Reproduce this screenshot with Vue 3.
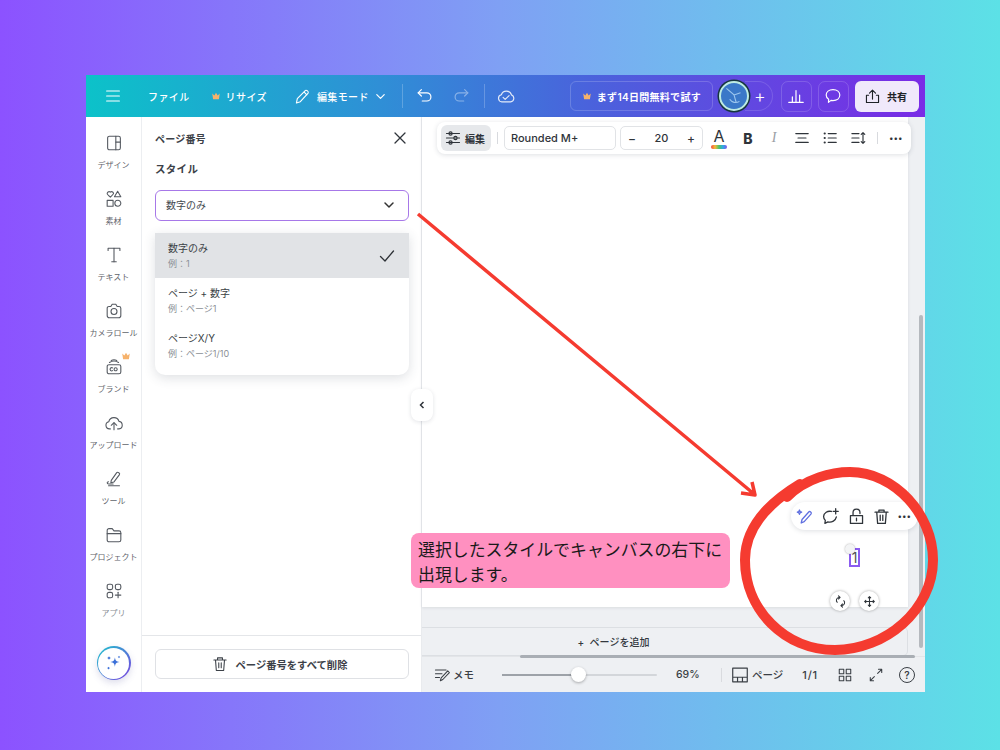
<script setup>
const railItems = [
  { label: 'デザイン', paths: ['M4 5.500a2 2 0 0 1 2-2h10a2 2 0 0 1 2 2v11a2 2 0 0 1-2 2H6a2 2 0 0 1-2-2z', 'M13 3.500v15', 'M13 10h5'] },
  { label: '素材', paths: ['M7 3.500c2-2 3.500 1 3.500 1.500S7 9 7 9 3.500 6 3.500 5 5 2 7 3.500z', 'M15 2.500l3.500 6h-7z', 'M3.500 12.500h6.500v6.500H3.500z', 'M18.500 15.700a3.300 3.300 0 1 1-6.600 0 3.300 3.300 0 0 1 6.600 0z'] },
  { label: 'テキスト', paths: ['M4.500 6V3.500h13V6', 'M11 3.500v15', 'M8.500 18.500h5'] },
  { label: 'カメラロール', paths: ['M3.500 8a2 2 0 0 1 2-2h2l1.500-2.500h4L14.500 6h2a2 2 0 0 1 2 2v8a2.500 2.500 0 0 1-2.500 2.500H6A2.500 2.500 0 0 1 3.500 16z', 'M14.300 11.500a3.300 3.300 0 1 1-6.600 0 3.300 3.300 0 0 1 6.600 0z'] },
  { label: 'ブランド', crown: true, paths: ['M3.500 10.500a2 2 0 0 1 2-2h11a2 2 0 0 1 2 2v6a2 2 0 0 1-2 2h-11a2 2 0 0 1-2-2z', 'M6 6c3-2 7-2 10 0', 'M8 3.800c2-1 4-1 6 0', 'M9.500 12a1.800 1.800 0 1 0 0 3', 'M14.500 13.500a1.700 1.700 0 1 1-3.400 0 1.700 1.700 0 0 1 3.400 0z'] },
  { label: 'アップロード', paths: ['M7 17.500H6a4 4 0 0 1-.7-7.900 5.800 5.800 0 0 1 11.200-.4 4.200 4.200 0 0 1 0 8.300H15', 'M11 18.500V11', 'M8 13.500l3-3 3 3'] },
  { label: 'ツール', paths: ['M8 12.500l6-8.500c1-1.300 4 .8 3 2.200l-6 8-3.500 1z', 'M10 16.500H5c-2 0-2 -2.500 0 -2.500', 'M5 18.500h12'] },
  { label: 'プロジェクト', paths: ['M3.500 6a2 2 0 0 1 2-2h3.500l2 2.500h5.500a2 2 0 0 1 2 2v8a2 2 0 0 1-2 2h-11a2 2 0 0 1-2-2z', 'M3.500 9.500h15'] },
  { label: 'アプリ', muted: true, paths: ['M3.500 5.500a2 2 0 0 1 2-2h2a2 2 0 0 1 2 2v2a2 2 0 0 1-2 2h-2a2 2 0 0 1-2-2z', 'M12.500 5.500a2 2 0 0 1 2-2h2a2 2 0 0 1 2 2v2a2 2 0 0 1-2 2h-2a2 2 0 0 1-2-2z', 'M3.500 14.500a2 2 0 0 1 2-2h2a2 2 0 0 1 2 2v2a2 2 0 0 1-2 2h-2a2 2 0 0 1-2-2z', 'M15.500 12.500v6', 'M12.500 15.500h6'] }
]

const styleOptions = [
  { title: '数字のみ', sample: '例：1', selected: true },
  { title: 'ページ + 数字', sample: '例：ページ1' },
  { title: 'ページX/Y', sample: '例：ページ1/10' }
]
</script>

<template>
  <div class="stage">
    <div class="window">
      <header class="topbar">
        <svg class="ic menu" viewBox="0 0 22 22"><path d="M4 5.500h14M4 11h14M4 16.500h14" /></svg>
        <span class="top-text file">ファイル</span>
        <span class="resize">
          <svg class="crown" viewBox="0 0 12 12"><path d="M1.500 3l2.500 2.500L6 2l2 3.500L10.500 3l-1 7h-7z" /></svg>
          <span class="top-text">リサイズ</span>
        </span>
        <span class="mode">
          <svg class="ic" viewBox="0 0 22 22"><path d="M4 18.500l1-5L14.500 4c1-1 4 1.500 3 3L8.500 17z" /><path d="M13 6l3 3" /></svg>
          <span class="top-text">編集モード</span>
          <svg class="ic chev" viewBox="0 0 14 14"><path d="M3 5l4 4 4-4" /></svg>
        </span>
        <i class="top-div first"></i>
        <svg class="ic undo" viewBox="0 0 22 22"><path d="M7 4L3.500 7.500 7 11" /><path d="M3.500 7.500H13a4.500 4.500 0 0 1 0 9H8" /></svg>
        <svg class="ic redo" viewBox="0 0 22 22"><path d="M15 4l3.500 3.500L15 11" /><path d="M18.500 7.500H9a4.500 4.500 0 0 0 0 9h5" /></svg>
        <i class="top-div"></i>
        <svg class="ic cloud" viewBox="0 0 22 22"><path d="M6.500 17.500a4 4 0 0 1-.6-7.900 5.800 5.800 0 0 1 11.100.2 4 4 0 0 1-.9 7.700z" /><path d="M7.800 12.500l2.300 2.300 4.300-4.300" /></svg>
        <div class="trial">
          <svg class="crown" viewBox="0 0 12 12"><path d="M1.500 3l2.500 2.500L6 2l2 3.500L10.500 3l-1 7h-7z" /></svg>
          <span>まず14日間無料で試す</span>
        </div>
        <div class="people">
          <span class="avatar">
            <svg viewBox="0 0 24 24"><path d="M5 5l7 6 2 7M12 11l6-2M8 15c2 3 6 4 9 2" /></svg>
          </span>
          <span class="add-person">+</span>
        </div>
        <span class="ghost-btn chart">
          <svg class="ic" viewBox="0 0 22 22"><path d="M3 18h16M7 18v-6M11 18V5M15 18v-8" /></svg>
        </span>
        <span class="ghost-btn">
          <svg class="ic" viewBox="0 0 22 22"><path d="M11 4c4.500 0 7.500 2.600 7.500 6S15.500 16 11 16c-.7 0-1.500 0-2.200-.2L6 18l.2-3.300C4.500 13.600 3.500 12 3.500 10 3.500 6.600 6.500 4 11 4z" /></svg>
        </span>
        <button class="share">
          <svg class="ic" viewBox="0 0 22 22"><path d="M11 14V3.500M7.500 7L11 3.500 14.500 7M6.500 9.500H4v8.500h14V9.500h-2.500" /></svg>
          <span>共有</span>
        </button>
      </header>

      <div class="workspace">
        <nav class="rail">
          <div v-for="item in railItems" :key="item.label" class="rail-item" :class="{ muted: item.muted }">
            <span class="rail-icon">
              <svg class="ic" viewBox="0 0 22 22"><path v-for="d in item.paths" :key="d" :d="d" /></svg>
              <svg v-if="item.crown" class="crown rail-crown" viewBox="0 0 12 12"><path d="M1.500 3l2.500 2.500L6 2l2 3.500L10.500 3l-1 7h-7z" /></svg>
            </span>
            <span class="rail-label">{{ item.label }}</span>
          </div>
          <div class="magic">
            <span class="magic-inner">
              <svg viewBox="0 0 22 22"><path d="M12 5c.6 3.500 1.500 4.400 5 5-3.500.6-4.400 1.500-5 5-.6-3.500-1.500-4.400-5-5 3.500-.6 4.400-1.500 5-5zM5.500 3.500l.7 1.300 1.300.7-1.300.7-.7 1.300-.7-1.300-1.300-.7 1.300-.7zM5 15l.6 1 1 .6-1 .6-.6 1-.6-1-1-.6 1-.6zM16.500 3l.5.9.9.5-.9.5-.5.9-.5-.9-.9-.5.9-.5z" /></svg>
            </span>
          </div>
        </nav>

        <aside class="panel">
          <div class="panel-body">
            <div class="panel-head">
              <span class="panel-title">ページ番号</span>
              <svg class="ic close" viewBox="0 0 16 16"><path d="M3 3l10 10M13 3L3 13" /></svg>
            </div>
            <div class="section-title">スタイル</div>
            <div class="select">
              <span>数字のみ</span>
              <svg class="ic sel-chev" viewBox="0 0 14 14"><path d="M3 5l4 4 4-4" /></svg>
            </div>
            <ul class="options">
              <li v-for="opt in styleOptions" :key="opt.title" class="option" :class="{ selected: opt.selected }">
                <div>
                  <div class="opt-title">{{ opt.title }}</div>
                  <div class="opt-sample">{{ opt.sample }}</div>
                </div>
                <svg v-if="opt.selected" class="ic check" viewBox="0 0 18 18"><path d="M2.500 9.500l4.500 4.500 8.500-10" /></svg>
              </li>
            </ul>
          </div>
          <div class="panel-foot">
            <button class="delete-all">
              <svg class="ic" viewBox="0 0 22 22"><path d="M3.500 6h15M8 6V3.500h6V6M5.500 6l1 13h9l1-13M9.500 9.500v6M12.500 9.500v6" /></svg>
              <span>ページ番号をすべて削除</span>
            </button>
          </div>
        </aside>

        <main class="canvas">
          <div class="canvas-body">
            <div class="page"></div>
            <div class="add-page">+&nbsp;&nbsp;ページを追加</div>
          </div>
          <footer class="footbar">
            <svg class="ic memo" viewBox="0 0 22 22"><path d="M3 5h13M3 9.500h8M3 14h5M9 18l1-3.500 8-8.500 2 2-8 8.500z" /></svg>
            <span class="foot-text memo-text">メモ</span>
            <div class="slider"><span class="slider-fill"></span><span class="slider-knob"></span></div>
            <span class="foot-text pct">69%</span>
            <i class="foot-div"></i>
            <svg class="ic page-ic" viewBox="0 0 22 22"><path d="M3 3.500h16v15H3zM3 13.500h16M8.300 13.500v5M13.700 13.500v5" /></svg>
            <span class="foot-text pages">ページ</span>
            <span class="foot-text count">1/1</span>
            <svg class="ic grid-ic" viewBox="0 0 22 22"><path d="M4 4h5.500v5.500H4zM12.500 4H18v5.500h-5.500zM4 12.500h5.500V18H4zM12.500 12.500H18V18h-5.500z" /></svg>
            <svg class="ic expand-ic" viewBox="0 0 22 22"><path d="M13 9l5-5M14 4h4v4M9 13l-5 5M4 14v4h4" /></svg>
            <span class="help">?</span>
          </footer>

          <span class="scroll-v"></span>
          <span class="scroll-h"></span>

          <div class="toolbar">
            <span class="tb-edit">
              <svg class="ic" viewBox="0 0 22 22"><path d="M3 5.500h16M3 11h16M3 16.500h16" /><circle cx="8" cy="5.500" r="2" /><circle cx="14" cy="11" r="2" /><circle cx="8" cy="16.500" r="2" /></svg>
              <b>編集</b>
            </span>
            <i class="tb-div"></i>
            <span class="tb-font">Rounded M+</span>
            <span class="tb-size"><em>−</em><span>20</span><em>+</em></span>
            <span class="tb-color">A<i class="rainbow"></i></span>
            <span class="tb-bold">B</span>
            <span class="tb-italic">I</span>
            <svg class="ic tb-ic align" viewBox="0 0 18 18"><path d="M2 4h14M4.500 9h9M2 14h14" /></svg>
            <svg class="ic tb-ic" viewBox="0 0 18 18"><path d="M7 4h9M7 9h9M7 14h9" /><path class="dots" d="M3 4h.1M3 9h.1M3 14h.1" /></svg>
            <svg class="ic tb-ic spacing" viewBox="0 0 18 18"><path d="M1 4h8M1 9h8M1 14h8M13.500 3v12M11.500 5l2-2 2 2M11.500 13l2 2 2-2" /></svg>
            <i class="tb-div second"></i>
            <span class="tb-more">•••</span>
          </div>

          <button class="collapse">
            <svg viewBox="0 0 10 10"><path d="M6.500 2L3.500 5l3 3" /></svg>
          </button>

          <div class="mini-bar">
            <svg class="ic wand" viewBox="0 0 22 22"><path d="M6 18.500l1-4 8-9c1-1 3.500 1 2.500 2.500l-8 9z" /><path d="M4 3.500l.7 1.800 1.800.7-1.800.7L4 8.500l-.7-1.800L1.500 6l1.800-.7z" /></svg>
            <svg class="ic" viewBox="0 0 22 22"><path d="M12 5.200A7 6.500 0 0 0 3 11c0 1.800.8 3.300 2 4.500L4.500 19l3.500-1.800c4.500 1 9-1.500 9.800-5.700M17 2v6M14 5h6" /></svg>
            <svg class="ic" viewBox="0 0 22 22"><path d="M4 10h14v9H4zM7 10V6.500a4 4 0 0 1 8 0v1M11 13v3" /></svg>
            <svg class="ic" viewBox="0 0 22 22"><path d="M3.500 6h15M8 6V3.500h6V6M5.500 6l1 13h9l1-13M9.500 9.500v6M12.500 9.500v6" /></svg>
            <span class="mini-more">•••</span>
          </div>

          <div class="page-num">1</div>
          <span class="num-handle"></span>
          <span class="round-btn rotate">
            <svg class="ic" viewBox="0 0 16 16"><path d="M7 3H6a3.500 3.500 0 0 0-2 6M9 13h1a3.500 3.500 0 0 0 2-6M5.500 1L7.500 3 5.500 5M10.500 15l-2-2 2-2" /></svg>
          </span>
          <span class="round-btn move">
            <svg class="ic" viewBox="0 0 16 16"><path d="M8 2v12M2 8h12M6.500 3.500L8 2l1.500 1.500M6.500 12.500L8 14l1.500-1.500M3.500 6.500L2 8l1.500 1.500M12.500 6.500L14 8l-1.500 1.500" /></svg>
          </span>
        </main>
      </div>
    </div>

    <div class="callout">選択したスタイルでキャンバスの右下に<br />出現します。</div>

    <svg class="marks" viewBox="0 0 1000 750">
      <path class="mark thin" d="M418 214L754 494M741 493L755 495L752 482" />
      <path class="mark" d="M787 497C806 478 832 472 850 472C895 472 933 515 933 560C933 610 885 650 835 650C785 650 745 610 745 560C745 530 765 505 800 484" />
    </svg>
  </div>
</template>

<style>
html, body { margin: 0; }
</style>

<style scoped>
.stage {
  position: relative;
  box-sizing: border-box;
  width: 1000px;
  height: 750px;
  padding: 75px 75px 58px 86px;
  display: flex;
  background: linear-gradient(90deg, #8c52ff 0%, #7fa0f4 50%, #5ce1e6 100%);
  font-family: Inter, "Noto Sans CJK JP", sans-serif;
  color: #2f343a;
  overflow: hidden;
}
.window { flex: 1; display: flex; flex-direction: column; background: #fff; min-width: 0; }
.ic { fill: none; stroke: currentColor; stroke-width: 1.3; stroke-linecap: round; stroke-linejoin: round; display: block; }

.topbar {
  height: 42px;
  flex: none;
  display: flex;
  align-items: center;
  color: #fff;
  background: linear-gradient(90deg, #0cc2c9 0%, #2f8fd6 35%, #4a62dc 60%, #7a2be6 100%);
}
.top-text { font-size: 10px; font-weight: 500; letter-spacing: .4px; white-space: nowrap; }
.menu { width: 20px; height: 20px; margin-left: 17px; }
.file { margin-left: 25px; }
.resize { display: flex; align-items: center; gap: 5px; margin-left: 21px; }
.crown { width: 10px; height: 10px; fill: #f6b26b; stroke: none; display: block; }
.mode { display: flex; align-items: center; margin-left: 26px; }
.mode .ic:first-child { width: 19px; height: 19px; margin-right: 5px; }
.chev { width: 13px; height: 13px; margin-left: 5px; }
.top-div { width: 1px; height: 24px; background: rgba(255, 255, 255, .22); margin-left: 0; }
.top-div.first { margin-left: 15px; }
.undo, .redo, .cloud { width: 20px; height: 20px; }
.undo { margin-left: 12px; }
.redo { margin: 0 13px 0 16px; opacity: .4; }
.cloud { margin-left: 11px; opacity: .85; }
.trial {
  box-sizing: border-box;
  width: 143px;
  height: 30px;
  margin-left: 54px;
  display: flex;
  align-items: center;
  justify-content: center;
  gap: 5px;
  font-size: 10px;
  font-weight: 600;
  letter-spacing: .3px;
  border: 1px solid rgba(255, 255, 255, .18);
  border-radius: 6px;
  white-space: nowrap;
}
.people { display: flex; align-items: center; margin-left: 6px; }
.avatar {
  position: relative;
  z-index: 1;
  box-sizing: border-box;
  width: 30px;
  height: 30px;
  border-radius: 50%;
  background: #3a78c8;
  border: 2px solid #bdebe3;
  box-shadow: 0 0 0 1.500px #17363f;
}
.avatar svg { display: block; fill: none; stroke: #9cc6ee; stroke-width: 1; }
.add-person {
  box-sizing: border-box;
  width: 28px;
  height: 30px;
  margin-left: -4px;
  padding-left: 3px;
  display: flex;
  align-items: center;
  justify-content: center;
  font-size: 18px;
  font-weight: 300;
  border: 1px solid rgba(255, 255, 255, .14);
  border-left: 0;
  border-radius: 0 15px 15px 0;
}
.ghost-btn {
  box-sizing: border-box;
  width: 31px;
  height: 31px;
  display: flex;
  align-items: center;
  justify-content: center;
  margin-left: 6px;
  border: 1px solid rgba(255, 255, 255, .16);
  border-radius: 7px;
}
.ghost-btn .ic { width: 20px; height: 20px; }
.ghost-btn.chart { margin-left: 8px; }
.share {
  width: 64px;
  height: 31px;
  margin-left: 6px;
  padding: 0 4px 0 0;
  display: flex;
  align-items: center;
  justify-content: center;
  gap: 5px;
  border: 0;
  border-radius: 6px;
  background: #f0e9fb;
  color: #1f2328;
  font: 600 10px Inter, "Noto Sans CJK JP", sans-serif;
}
.share .ic { width: 19px; height: 19px; }

.workspace { flex: 1; display: flex; min-height: 0; }
.rail {
  box-sizing: border-box;
  width: 56px;
  flex: none;
  display: flex;
  flex-direction: column;
  align-items: center;
  padding-top: 16px;
  border-right: 1px solid #eceef1;
}
.rail-item {
  height: 56px;
  width: 100%;
  display: flex;
  flex-direction: column;
  align-items: center;
  color: #555a61;
  flex: none;
}
.rail-icon { position: relative; display: block; width: 20px; height: 20px; }
.rail-icon .ic { width: 20px; height: 20px; stroke-width: 1.200; }
.rail-crown { position: absolute; top: -6px; right: -7px; }
.rail-label { margin-top: 5px; font-size: 8px; line-height: 14px; letter-spacing: 0; white-space: nowrap; color: #5f646b; }
.rail-item.muted .rail-label { color: #8a8f96; }
.magic {
  width: 34px;
  height: 34px;
  margin-top: 9px;
  padding: 1.500px;
  box-sizing: border-box;
  border-radius: 50%;
  background: linear-gradient(135deg, #1cc5cc, #7a3fe0);
  box-shadow: 0 3px 7px rgba(90, 90, 160, .2);
}
.magic-inner { display: flex; width: 100%; height: 100%; border-radius: 50%; background: #fff; align-items: center; justify-content: center; }
.magic-inner svg { width: 20px; height: 20px; fill: #3a6fd8; }

.panel {
  box-sizing: border-box;
  width: 280px;
  flex: none;
  display: flex;
  flex-direction: column;
  border-right: 1px solid #e9ebee;
}
.panel-body { flex: 1; padding: 0 12px 0 13px; }
.panel-head { height: 42px; display: flex; align-items: center; justify-content: space-between; }
.panel-title { font-size: 10px; font-weight: 600; color: #3c4148; letter-spacing: .2px; }
.close { width: 16px; height: 16px; margin-right: 1px; color: #30353b; }
.section-title { margin-top: 3px; font-size: 10.500px; line-height: 16px; font-weight: 700; color: #3c4148; letter-spacing: .3px; }
.select {
  box-sizing: border-box;
  height: 31px;
  margin-top: 12px;
  padding: 0 12px 2px 10px;
  display: flex;
  align-items: center;
  justify-content: space-between;
  font-size: 10px;
  color: #444a50;
  border: 1px solid #a778e8;
  border-radius: 6px;
}
.sel-chev { width: 14px; height: 14px; stroke-width: 1.500; color: #333; }
.options {
  list-style: none;
  margin: 12px 0 0;
  padding: 0 0 7px;
  border-radius: 0 0 10px 10px;
  overflow: hidden;
  box-shadow: 0 3px 12px rgba(50, 60, 80, .16);
}
.option {
  box-sizing: border-box;
  height: 45px;
  padding: 8px 13px;
  display: flex;
  align-items: center;
  justify-content: space-between;
}
.option.selected { background: #e1e3e6; }
.opt-title { font-size: 10px; line-height: 14px; color: #3a3f45; }
.opt-sample { margin-top: 3px; font-size: 9px; line-height: 12px; color: #8b9096; }
.check { width: 18px; height: 18px; color: #2d3136; }
.panel-foot { height: 57px; flex: none; padding: 13px 12px 0 13px; box-sizing: border-box; border-top: 1px solid #e4e6e9; }
.delete-all {
  width: 100%;
  height: 30px;
  padding: 0 6px 0 0;
  display: flex;
  align-items: center;
  justify-content: center;
  gap: 7px;
  background: #fff;
  border: 1px solid #dfe1e5;
  border-radius: 6px;
  font: 600 10.300px Inter, "Noto Sans CJK JP", sans-serif;
  color: #3c4148;
}
.delete-all .ic { width: 18px; height: 18px; }

.canvas { position: relative; flex: 1; min-width: 0; display: flex; flex-direction: column; background: #eef0f3; }
.canvas-body { flex: 1; min-height: 0; display: flex; flex-direction: column; border-bottom: 1px solid #e3e5e8; }
.page { height: 490px; width: 486px; flex: none; background: #fff; box-shadow: 0 1px 3px rgba(40, 50, 60, .1); }
.add-page {
  box-sizing: border-box;
  width: 486px;
  height: 30px;
  margin-top: 20px;
  padding-right: 102px;
  display: flex;
  align-items: center;
  justify-content: center;
  font-size: 10px;
  font-weight: 500;
  color: #33383e;
  border: 1px solid #dcdfe3;
  border-left: 0;
  border-radius: 0 5px 5px 0;
}
.footbar { height: 35px; flex: none; display: flex; align-items: center; font-size: 10px; }
.foot-text { font-size: 10.500px; font-weight: 500; color: #3a3f45; white-space: nowrap; }
.footbar > .ic { width: 18px; height: 18px; color: #3a3f45; }
.memo { margin-left: 11px; }
.memo-text { margin-left: 2px; }
.slider { position: relative; width: 155px; height: 2px; margin-left: 28px; background: #d3d6da; border-radius: 2px; }
.slider-fill { position: absolute; left: 0; top: 0; bottom: 0; width: 76px; background: #9da2a8; }
.slider-knob {
  position: absolute;
  left: 69px;
  top: -7px;
  width: 15px;
  height: 15px;
  border-radius: 50%;
  background: #fff;
  box-shadow: 0 1px 3px rgba(0, 0, 0, .3);
}
.pct { margin-left: 19px; width: 25px; }
.foot-div { width: 1px; height: 14px; margin-left: 20px; background: #d9dbdf; }
.footbar > .page-ic { width: 20px; height: 20px; margin-left: 8px; }
.pages { margin-left: 2px; }
.count { margin-left: 19px; font-size: 11px; letter-spacing: .8px; }
.grid-ic { margin-left: 18px; }
.expand-ic { margin-left: 13px; }
.help {
  box-sizing: border-box;
  width: 16px;
  height: 16px;
  margin-left: 14px;
  display: flex;
  align-items: center;
  justify-content: center;
  font-size: 10px;
  font-weight: 600;
  border: 1.300px solid #3a3f45;
  border-radius: 50%;
  color: #3a3f45;
}
.scroll-v { position: absolute; top: 198px; left: 497px; width: 4px; height: 333px; border-radius: 2px; background: #b5b9be; }
.scroll-h { position: absolute; top: 538px; left: 98px; width: 395px; height: 3px; border-radius: 2px; background: #a9aeb4; }

.toolbar {
  position: absolute;
  top: 5px;
  left: 15px;
  box-sizing: border-box;
  width: 474px;
  height: 32px;
  padding-left: 4px;
  display: flex;
  align-items: center;
  background: #fff;
  border-radius: 8px;
  box-shadow: 0 1px 5px rgba(50, 60, 80, .16);
}
.tb-edit {
  box-sizing: border-box;
  width: 50px;
  height: 26px;
  padding-right: 3px;
  display: flex;
  align-items: center;
  justify-content: center;
  gap: 3px;
  background: #e6e8eb;
  border-radius: 6px;
  font-size: 10px;
}
.tb-edit .ic { width: 18px; height: 18px; }
.tb-edit b { font-weight: 600; }
.tb-div { width: 1px; height: 12px; margin: 0 6px; background: #d8dade; }
.tb-font {
  box-sizing: border-box;
  width: 112px;
  height: 24px;
  padding-left: 6px;
  line-height: 22px;
  font-size: 11px;
  font-weight: 500;
  letter-spacing: 0;
  border: 1px solid #e1e3e6;
  border-radius: 5px;
}
.tb-size {
  box-sizing: border-box;
  width: 83px;
  height: 24px;
  margin-left: 4px;
  padding: 0 7px;
  display: flex;
  align-items: center;
  justify-content: space-between;
  font-size: 11px;
  font-weight: 500;
  border: 1px solid #e1e3e6;
  border-radius: 5px;
}
.tb-size em { font-style: normal; font-size: 12px; }
.tb-color {
  position: relative;
  width: 18px;
  margin-left: 7px;
  text-align: center;
  font-size: 16px;
  line-height: 18px;
  padding-bottom: 4px;
}
.rainbow {
  position: absolute;
  left: 1px;
  right: 1px;
  bottom: 0;
  height: 4px;
  border-radius: 2px;
  background: linear-gradient(90deg, #f04a3c, #f5b93a, #49c46a, #2fa8e8, #8454e8);
}
.tb-bold { margin-left: 14px; width: 12px; font-size: 14px; font-weight: 800; text-align: center; }
.tb-italic { margin-left: 15px; width: 10px; font: italic 14px "Liberation Serif", serif; color: #9a9ea4; text-align: center; }
.tb-ic { width: 16px; height: 16px; margin-left: 12px; }
.tb-ic.align { margin-left: 15px; }
.tb-ic.spacing { margin-left: 13px; }
.tb-ic .dots { stroke-width: 2.400; }
.tb-div.second { margin: 0 0 0 10px; }
.tb-more { margin-left: 11px; font-size: 8px; letter-spacing: 0; }

.collapse {
  position: absolute;
  top: 272px;
  left: -11px;
  width: 22px;
  height: 32px;
  padding: 0;
  display: flex;
  align-items: center;
  justify-content: center;
  background: #fff;
  border: 0;
  border-radius: 8px;
  box-shadow: 0 1px 4px rgba(50, 60, 80, .14);
}
.collapse svg { width: 10px; height: 10px; fill: none; stroke: #2f343a; stroke-width: 1.500; }

.mini-bar {
  position: absolute;
  top: 385px;
  left: 369px;
  box-sizing: border-box;
  width: 127px;
  height: 28px;
  padding: 0 5px;
  display: flex;
  align-items: center;
  justify-content: space-between;
  background: #fff;
  border-radius: 14px;
  box-shadow: 0 1px 5px rgba(50, 60, 80, .16);
}
.mini-bar .ic { width: 19px; height: 19px; stroke-width: 1.500; }
.mini-bar .wand { color: #5f6fe0; }
.mini-more { font-size: 8px; margin-right: 2px; }
.page-num {
  position: absolute;
  top: 431px;
  left: 427px;
  box-sizing: border-box;
  width: 11px;
  height: 19px;
  text-align: center;
  font-size: 14px;
  line-height: 15px;
  color: #555;
  border: 2px solid #8b5cf0;
}
.num-handle {
  position: absolute;
  top: 427px;
  left: 423px;
  width: 10px;
  height: 10px;
  border-radius: 50%;
  background: #f3f4f5;
  box-shadow: 0 0 2px rgba(0, 0, 0, .35);
}
.round-btn {
  position: absolute;
  top: 474px;
  width: 20px;
  height: 20px;
  display: flex;
  align-items: center;
  justify-content: center;
  background: #fff;
  border-radius: 50%;
  box-shadow: 0 0 3px rgba(0, 0, 0, .35);
}
.round-btn .ic { width: 13px; height: 13px; }
.rotate { left: 408px; }
.move { left: 437px; }

.callout {
  position: absolute;
  left: 411px;
  top: 533px;
  box-sizing: border-box;
  width: 319px;
  height: 55px;
  padding: 5px 0 0 7px;
  background: #ff90c0;
  border-radius: 8px;
  font-size: 16.900px;
  line-height: 24.500px;
  color: #1a1a1a;
  white-space: nowrap;
}
.marks { position: absolute; left: 0; top: 0; width: 1000px; height: 750px; pointer-events: none; }
.mark { fill: none; stroke: #f53b30; stroke-width: 10; stroke-linecap: round; stroke-linejoin: round; }
.mark.thin { stroke-width: 3.500; stroke-linecap: butt; }
</style>
